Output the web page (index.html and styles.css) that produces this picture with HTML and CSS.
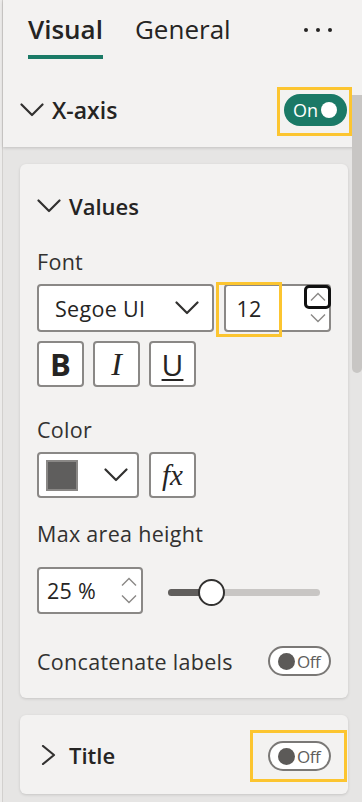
FILE: index.html
```html
<!DOCTYPE html>
<html lang="en">
<head>
    <meta charset="UTF-8">
    <meta name="viewport" content="width=device-width, initial-scale=1.0">
    <title>Format pane - X-axis</title>
    <link rel="stylesheet" href="styles.css">
</head>
<body>
    <div class="pane">

        <div class="header">
            <div class="tabs">
                <span class="tab active">Visual</span>
                <span class="tab">General</span>
                <svg class="more" width="30" height="6" viewBox="0 0 30 6">
                    <circle cx="3" cy="3" r="2"/>
                    <circle cx="15" cy="3" r="2"/>
                    <circle cx="27" cy="3" r="2"/>
                </svg>
            </div>
            <div class="section-row">
                <svg class="chev-down" width="24" height="14" viewBox="0 0 24 14"><path d="M1.5 1.5 L12 12 L22.5 1.5"/></svg>
                <span class="section-title">X-axis</span>
                <span class="toggle-wrap">
                    <span class="toggle on">On<i class="knob"></i></span>
                    <span class="hl hl-on"></span>
                </span>
            </div>
        </div>

        <div class="card">
            <div class="card-head">
                <svg class="chev-down" width="24" height="14" viewBox="0 0 24 14"><path d="M1.5 1.5 L12 12 L22.5 1.5"/></svg>
                <span class="card-title">Values</span>
            </div>

            <div class="label">Font</div>
            <div class="row">
                <div class="select font-select">
                    <span>Segoe UI</span>
                    <svg class="chev-down" width="24" height="14" viewBox="0 0 24 14"><path d="M1.5 1.5 L12 12 L22.5 1.5"/></svg>
                </div>
                <div class="num size-num">
                    <span>12</span>
                    <span class="spin-up focused">
                        <svg width="16" height="10" viewBox="0 0 16 10"><path d="M1 8.5 L8 1.5 L15 8.5"/></svg>
                    </span>
                    <span class="spin-down">
                        <svg width="16" height="10" viewBox="0 0 16 10"><path d="M1 1.5 L8 8.5 L15 1.5"/></svg>
                    </span>
                    <span class="hl hl-size"></span>
                </div>
            </div>
            <div class="fmt-row">
                <span class="fmt-btn bold">B</span>
                <span class="fmt-btn italic">I</span>
                <span class="fmt-btn under">U</span>
            </div>

            <div class="label color-label">Color</div>
            <div class="row">
                <div class="select color-select">
                    <span class="swatch"></span>
                    <svg class="chev-down" width="24" height="14" viewBox="0 0 24 14"><path d="M1.5 1.5 L12 12 L22.5 1.5"/></svg>
                </div>
                <span class="fmt-btn fx">fx</span>
            </div>

            <div class="label max-label">Max area height</div>
            <div class="row slider-row">
                <div class="num pct-num">
                    <span>25 %</span>
                    <span class="spin-stack">
                        <svg width="16" height="10" viewBox="0 0 16 10"><path d="M1 8.5 L8 1.5 L15 8.5"/></svg>
                        <svg width="16" height="10" viewBox="0 0 16 10"><path d="M1 1.5 L8 8.5 L15 1.5"/></svg>
                    </span>
                </div>
                <div class="slider">
                    <div class="slider-fill"></div>
                    <div class="slider-thumb"></div>
                </div>
            </div>

            <div class="concat-row">
                <span class="label-inline">Concatenate labels</span>
                <span class="toggle off"><i class="knob"></i>Off</span>
            </div>
        </div>

        <div class="card title-card">
            <svg class="chev-right" width="16" height="20" viewBox="0 0 16 20"><path d="M2 1 L13 10 L2 19"/></svg>
            <span class="card-title">Title</span>
            <span class="toggle-wrap push">
                <span class="toggle off"><i class="knob"></i>Off</span>
                <span class="hl hl-title"></span>
            </span>
        </div>

        <div class="scroll-thumb"></div>
    </div>
</body>
</html>
```

FILE: styles.css
```css
* {
    box-sizing: border-box;
}

body {
    margin: 0;
    width: 362px;
    height: 802px;
    overflow: hidden;
    background: #ecebea;
    font-family: "Segoe UI", "Open Sans", sans-serif;
    color: #252423;
}

.pane {
    position: relative;
    height: 802px;
    margin-left: 2px;
    border-left: 1px solid #d2d0ce;
    background: #e6e5e4;
}

/* header with tabs and the section toggle */
.header {
    position: relative;
    z-index: 1;
    height: 147px;
    background: #f3f2f1;
    box-shadow: 0 1px 3px rgba(0, 0, 0, 0.16);
}

.tabs {
    display: flex;
    align-items: flex-start;
    height: 73px;
    padding-left: 25px;
    gap: 32px;
}

.tab {
    padding-top: 12px;
    padding-bottom: 9px;
    font-size: 26px;
    line-height: 34px;
    color: #252423;
    border-bottom: 4px solid transparent;
}

.tab.active {
    font-weight: 600;
    border-bottom-color: #1a7a66;
}

.more {
    margin-left: auto;
    margin-right: 29px;
    margin-top: 27px;
    fill: #252423;
}

.section-row {
    display: flex;
    align-items: center;
    height: 74px;
    padding-left: 17px;
}

.chev-down path,
.chev-right path {
    fill: none;
    stroke: #323130;
    stroke-width: 2.2;
    stroke-linecap: round;
    stroke-linejoin: round;
}

.section-title {
    margin-left: 8px;
    font-size: 23px;
    font-weight: 600;
}

.toggle-wrap {
    position: relative;
    display: flex;
    margin-left: auto;
    margin-right: 15px;
}

.toggle {
    display: flex;
    align-items: center;
    width: 63px;
    border-radius: 16px;
    font-size: 18px;
}

.toggle.on {
    height: 32px;
    padding-left: 9px;
    background: #1a7966;
    color: #ffffff;
}

.toggle.on .knob {
    margin-left: auto;
    margin-right: 10px;
    width: 16px;
    height: 16px;
    border-radius: 50%;
    background: #ffffff;
}

.toggle.off {
    height: 30px;
    padding-left: 8px;
    border: 2px solid #7a7876;
    background: #ffffff;
    color: #605e5c;
    font-size: 17px;
    letter-spacing: -0.5px;
}

.toggle.off .knob {
    width: 17px;
    height: 17px;
    margin-right: 2px;
    border-radius: 50%;
    background: #5c5a58;
}

/* yellow annotation frames drawn over the controls */
.hl {
    position: absolute;
    border: 3px solid #fcc530;
    pointer-events: none;
}

.hl-on {
    left: -7px;
    top: -7px;
    width: 75px;
    height: 49px;
}

.hl-size {
    left: -10px;
    top: -4px;
    width: 66px;
    height: 55px;
}

.hl-title {
    left: -18px;
    top: -11px;
    width: 97px;
    height: 52px;
}

/* cards */
.card {
    margin: 17px 14px 0 17px;
    padding: 20px 17px 22px 17px;
    background: #f3f2f1;
    border-radius: 6px;
    box-shadow: 0 1px 3px rgba(0, 0, 0, 0.14);
}

.card-head {
    display: flex;
    align-items: center;
    height: 44px;
}

.card-title {
    margin-left: 8px;
    font-size: 22px;
    font-weight: 600;
}

.label {
    margin-top: 20px;
    font-size: 21.5px;
    line-height: 28px;
    letter-spacing: 0.3px;
    color: #323130;
}

.color-label {
    margin-top: 29px;
}

.max-label {
    margin-top: 22px;
}

.row {
    display: flex;
    align-items: center;
    gap: 10px;
    margin-top: 8px;
}

.select,
.num,
.fmt-btn {
    display: flex;
    align-items: center;
    border: 2px solid #8a8886;
    border-radius: 4px;
    background: #ffffff;
    color: #252423;
}

.font-select {
    width: 178px;
    height: 48px;
    padding: 0 13px 0 16px;
    justify-content: space-between;
    font-size: 21.5px;
    letter-spacing: 0.3px;
}

.num {
    position: relative;
    height: 48px;
    padding-left: 10px;
    font-size: 21.5px;
    letter-spacing: 0.3px;
}

.size-num {
    width: 107px;
}

.spin-up,
.spin-down {
    position: absolute;
    right: -2px;
    display: flex;
    align-items: center;
    justify-content: center;
    width: 27px;
}

.spin-up {
    top: -1px;
    height: 24px;
    border: 3px solid #111111;
    border-radius: 5px;
    background: #ffffff;
}

.spin-down {
    top: 26px;
    height: 12px;
}

.spin-up path,
.spin-down path,
.spin-stack path {
    fill: none;
    stroke: #8a8886;
    stroke-width: 1.4;
}

.fmt-row {
    display: flex;
    gap: 9px;
    margin-top: 9px;
}

.fmt-btn {
    justify-content: center;
    width: 47px;
    height: 46px;
}

.bold {
    font-size: 31px;
    font-weight: 700;
}

.italic {
    font-family: "Liberation Serif", serif;
    font-style: italic;
    font-size: 32px;
}

.under {
    font-size: 30px;
    text-decoration: underline;
    text-decoration-thickness: 2px;
    text-underline-offset: 3px;
}

.color-select {
    width: 102px;
    height: 46px;
    padding: 0 9px 0 7px;
    justify-content: space-between;
}

.swatch {
    width: 32px;
    height: 31px;
    border: 2px solid #8a8886;
    background: #5f5e5d;
}

.fx {
    font-family: "Liberation Serif", serif;
    font-style: italic;
    font-size: 29px;
}

.slider-row {
    margin-top: 19px;
    gap: 0;
}

.pct-num {
    width: 106px;
    height: 47px;
    padding-left: 8px;
}

.spin-stack {
    position: absolute;
    right: 4px;
    top: 8px;
    display: flex;
    flex-direction: column;
    gap: 7px;
}

.slider {
    position: relative;
    width: 152px;
    height: 7px;
    margin-left: 25px;
    margin-top: 4px;
    border-radius: 4px;
    background: #c8c6c4;
}

.slider-fill {
    width: 43px;
    height: 100%;
    border-radius: 4px;
    background: #605e5c;
}

.slider-thumb {
    position: absolute;
    left: 30px;
    top: -10px;
    width: 27px;
    height: 27px;
    border: 2px solid #323130;
    border-radius: 50%;
    background: #ffffff;
}

.concat-row {
    display: flex;
    align-items: center;
    justify-content: space-between;
    height: 30px;
    margin-top: 32px;
}

.label-inline {
    font-size: 21.5px;
    letter-spacing: 0.3px;
    color: #323130;
}

.title-card {
    display: flex;
    align-items: center;
    height: 79px;
    padding: 0 17px 0 21px;
}

.title-card .card-title {
    margin-left: 12px;
}

.title-card .toggle-wrap {
    margin-right: 0;
    margin-top: 3px;
}

.scroll-thumb {
    position: absolute;
    z-index: 2;
    left: 349px;
    top: 95px;
    width: 10px;
    height: 278px;
    border-radius: 0 0 5px 5px;
    background: #c8c6c4;
}
```
